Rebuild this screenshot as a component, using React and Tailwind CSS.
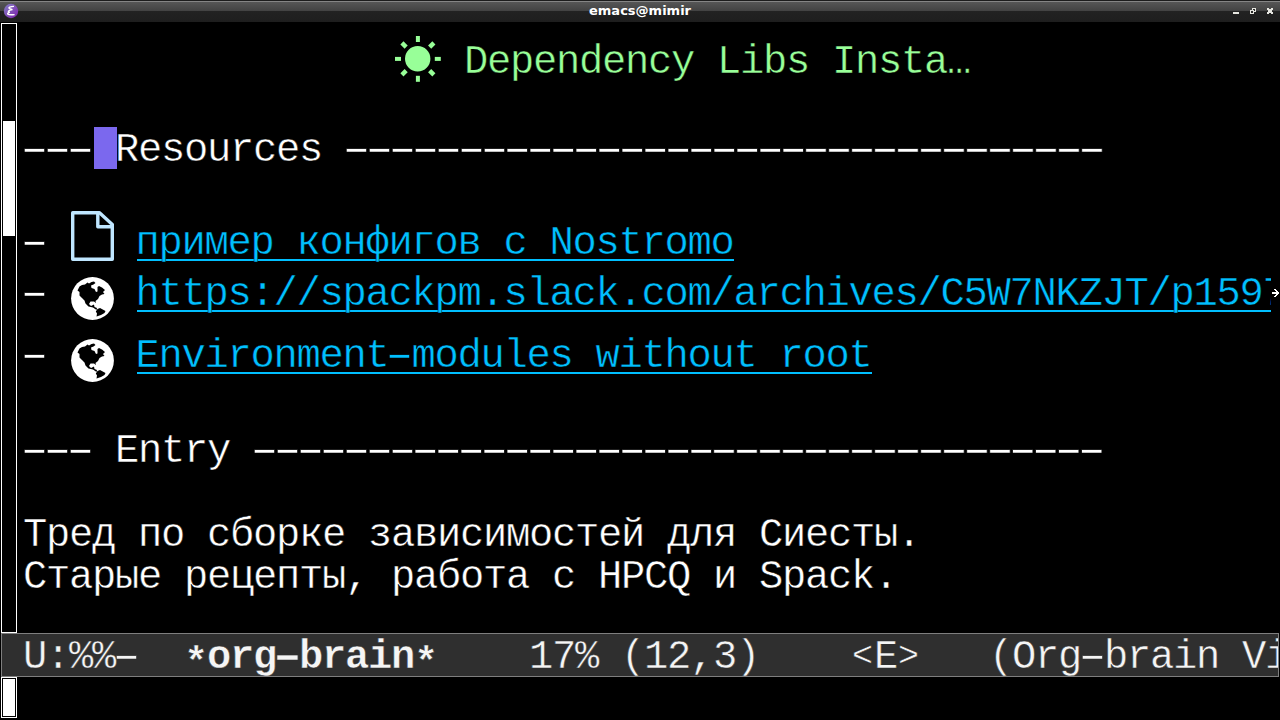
import React from "react";

const FONT = "font-['Liberation_Mono','DejaVu_Sans_Mono',monospace]";
const TEXT = "text-[40.5px] tracking-[-1.304px] leading-[46px]";

function Dashes({ count }) {
  return (
    <span className="inline-flex shrink-0" style={{ width: count * 22.98 }}>
      <span className="-mr-[40px] ml-[-11px] block w-max shrink-0 origin-left scale-x-[1.85] tracking-[-11.882px]">
        {"-".repeat(count)}
      </span>
    </span>
  );
}

function Row({ className = "", children }) {
  return (
    <div className={`flex h-[42px] shrink-0 whitespace-pre ${className}`}>{children}</div>
  );
}

function Link({ children }) {
  return (
    <a className="flex h-[41px] border-b-2 border-[#00bfff] pr-px leading-[47px] text-[#00bfff]">
      <span className="-ml-[1.5px]">{children}</span>
    </a>
  );
}

function Sun() {
  return (
    <svg className="h-[46px] w-[46px] shrink-0" viewBox="0 0 46 46" fill="#98ff98">
      <circle cx="22.7" cy="22.7" r="12.7" />
      {[0, 90, 180, 270].map((a) => (
        <rect key={a} x="20.9" y="0" width="4" height="6" transform={`rotate(${a} 22.9 22.9)`} />
      ))}
      {[45, 135, 225, 315].map((a) => (
        <rect key={a} x="20.7" y="0.3" width="4.4" height="6" transform={`rotate(${a} 22.9 22.9)`} />
      ))}
    </svg>
  );
}

function FileIcon() {
  return (
    <svg className="h-[50px] w-[43px]" viewBox="0 0 43 50" fill="none" stroke="#bfe6ff" strokeWidth="3.4" strokeLinejoin="round">
      <path d="M1.7 1.7H28.5L41.3 13.5V48.3H1.7Z" />
      <path d="M26.8 2V15.8H41" />
    </svg>
  );
}

function Globe() {
  return (
    <svg className="h-[43px] w-[43px]" viewBox="0 0 43 43">
      <circle cx="21.5" cy="21.5" r="21.4" fill="#fff" />
      <path
        fill="#000"
        d="M6.5 13.5L8.5 9.5L11 8L14 7.5L16.5 5.5L18 6.5L20.5 5L23 4.5L24.5 6L22.5 7.5L20 8.5L20.5 11L23.5 12L25 15L26.5 14.5V10L28 9L31 10.5L34 13L32 15L33.5 17L31 17.5L28.5 19L27 22L24.5 24L25 26L23 24.5L19.5 24.5L18 27L20 29L23 27.5L23.5 30L26 31L25.5 33L22 30.5L17.5 29.5L14.5 26.5L13.5 23.5L11 21L8.5 18.5L8.5 15Z M26.5 32L29 31L34.5 34L33.5 36L30 38L25.5 39.5L26 36.5L24.8 34.5Z"
      />
    </svg>
  );
}

function EmacsLogo() {
  return (
    <svg className="mt-[2px] h-4 w-4" viewBox="0 0 16 16">
      <defs>
        <linearGradient id="orb" x1="0" y1="0" x2="1" y2="1">
          <stop offset="0" stopColor="#8381c5" />
          <stop offset="1" stopColor="#7f1fad" />
        </linearGradient>
      </defs>
      <circle cx="8" cy="8" r="7.2" fill="url(#orb)" />
      <path d="M11 3.4C7.5 3.4 4.6 4.6 6.6 5.6L9.4 6.6C5.5 7.2 4 8.8 6.8 9.2C3 10.6 4 12.4 11.6 11.6" fill="none" stroke="#fff" strokeWidth="1.4" />
    </svg>
  );
}

function TitleBar() {
  return (
    <header className="flex h-[22px] shrink-0 items-start border-t border-[#1c1c1c] bg-[linear-gradient(#858585_0px,#858585_1px,#565656_1px,#424242_10px,#222_10px,#1e1e1e_21px)] pl-[3px]">
      <EmacsLogo />
      <h1 className="ml-[28px] flex-1 text-center font-['DejaVu_Sans',sans-serif] text-[13px] leading-[20px] font-bold tracking-normal text-white">
        emacs@mimir
      </h1>
      <svg className="mt-[5px] h-[10px] w-[47px]" viewBox="0 0 47 10" shapeRendering="crispEdges" fill="#e6e6e0">
        <path d="M0 6h6v2H0Z M19 2h4v4h-2v2h-4V4h2Z" />
        <path d="M20 3h2v2h-1V4h-1Z M18 5h2v2h-2Z" fill="#2a2a2a" />
        <path d="M34 2h2v1h2V2h2v2h-1v2h1v2h-2V7h-2v1h-2V6h1V4h-1Z" />
      </svg>
    </header>
  );
}

function Star() {
  return <b className="w-[23px] shrink-0 pt-[7px] font-bold">*</b>;
}

function Angle({ children }) {
  return <span className="w-[23px] shrink-0 text-center text-[35px] tracking-normal">{children}</span>;
}

export default function App() {
  return (
    <div className={`flex h-[720px] w-[1280px] flex-col overflow-hidden bg-black text-white ${FONT} ${TEXT}`}>
      <TitleBar />
      <div className="flex h-[611px] shrink-0">
        <div className="mt-px ml-px flex h-[610px] w-4 shrink-0 flex-col border border-white px-px pt-[97px]">
          <div className="h-[115px] bg-white" />
        </div>
        <main className="flex w-[1254px] shrink-0 flex-col overflow-hidden pl-[6px] [-webkit-text-stroke:0.45px_#000]">
          <Row className="mt-[17px] text-[#98ff98]">
            <div className="mt-[-3px] mr-[23px] ml-[372px] h-[46px] w-[46px] shrink-0">
              <Sun />
            </div>
            <span>Dependency Libs Insta…</span>
          </Row>
          <Row className="mt-[46px]">
            <Dashes count={3} />
            <span className="ml-[2px] h-[42px] w-[23px] bg-[#7b68ee]" />
            <span className="-ml-[2px]">Resources </span>
            <Dashes count={33} />
          </Row>
          <Row className="mt-[51px]">
            <Dashes count={1} />
            <div className="mt-[-9px] mr-[23px] ml-[25px] h-[50px] w-[43px] shrink-0">
              <FileIcon />
            </div>
            <Link>пример конфигов с Nostromo</Link>
          </Row>
          <Row className="mt-[9px]">
            <Dashes count={1} />
            <div className="mt-[6px] mr-[23px] ml-[25px] h-[43px] w-[43px] shrink-0">
              <Globe />
            </div>
            <Link>https://spackpm.slack.com/archives/C5W7NKZJT/p1597</Link>
          </Row>
          <Row className="mt-[20px]">
            <Dashes count={1} />
            <div className="mt-[6px] mr-[23px] ml-[25px] h-[43px] w-[43px] shrink-0">
              <Globe />
            </div>
            <Link>
              Environment
              <Dashes count={1} />
              modules without root
            </Link>
          </Row>
          <Row className="mt-[53px]">
            <Dashes count={3} />
            <span> Entry </span>
            <Dashes count={37} />
          </Row>
          <Row className="mt-[42px]">Тред по сборке зависимостей для Сиесты.</Row>
          <Row>Старые рецепты, работа с HPCQ и Spack.</Row>
        </main>
        <svg className="mt-[267px] h-[9px] w-[9px] shrink-0" viewBox="0 0 9 9" shapeRendering="crispEdges" fill="#fff">
          <path d="M1 3h4v2H1Z M3 0h2v1h1v1h1v1h1v2H7v1H6v1H5v1H3V7h1V6h1V2H4V1H3Z" />
        </svg>
      </div>
      <footer className="ml-px flex h-[44px] w-[1278px] shrink-0 overflow-hidden border border-[#7f7f7f] bg-[#2f2f2f] pl-[21px] whitespace-pre text-[#f5f5f5] [-webkit-text-stroke:0.45px_#2f2f2f]">
        <span>U:%%</span>
        <Dashes count={1} />
        <span>{"  "}</span>
        <Star />
        <b className="font-bold">org</b>
        <b className="font-bold"><Dashes count={1} /></b>
        <b className="font-bold">brain</b>
        <Star />
        <span>{"    17% (12,3)    "}</span>
        <Angle>{"<"}</Angle>
        <span>E</span>
        <Angle>{">"}</Angle>
        <span>{"   (Org"}</span>
        <Dashes count={1} />
        <span>brain Vi</span>
      </footer>
      <div className="ml-px h-[41px] w-4 shrink-0 border border-white p-px">
        <div className="h-full bg-white" />
      </div>
    </div>
  );
}
